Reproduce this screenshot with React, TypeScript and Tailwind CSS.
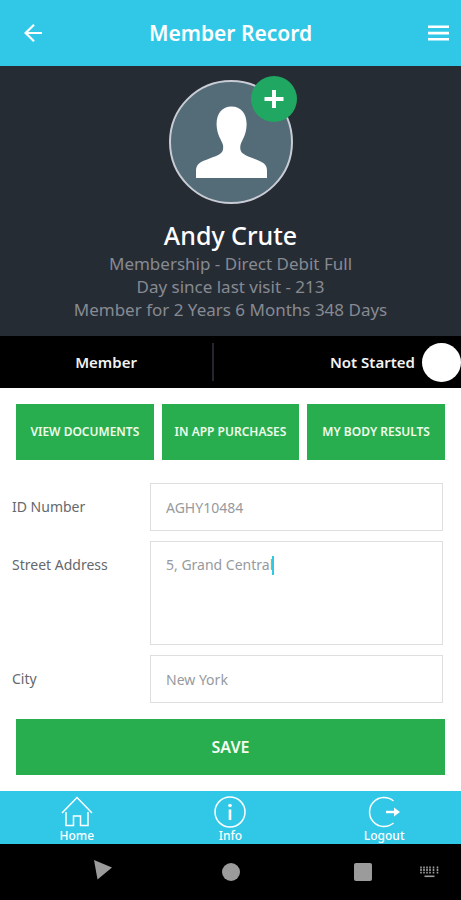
import type { ReactNode } from "react";

function Header() {
  return (
    <header className="grid h-[66px] grid-cols-[64px_1fr_64px] items-center bg-[#31c8e8] text-white">
      <button type="button" aria-label="Back" className="flex h-full items-center pl-6">
        <svg viewBox="0 0 18 18" className="h-[18px] w-[18px]" fill="none" stroke="currentColor" strokeWidth="2.2">
          <path d="M18 9H1.5M10 0.8 1.6 9 10 17.2" />
        </svg>
      </button>
      <h1 className="text-center text-[21px] leading-8 font-semibold">Member Record</h1>
      <button type="button" aria-label="Menu" className="flex h-full items-center justify-end pr-3">
        <svg viewBox="0 0 21 16" className="h-4 w-[21px]" fill="currentColor">
          <path d="M0 0.5h21v2.6H0zM0 6.8h21v2.6H0zM0 13h21v2.6H0z" />
        </svg>
      </button>
    </header>
  );
}

function Profile() {
  return (
    <section className="flex flex-col items-center bg-[#262c34] pt-[14px] pb-[15px] text-center">
      <div className="relative">
        <div className="h-[124px] w-[124px] overflow-hidden rounded-full border-2 border-[#c9ccd4] bg-[#546b78]">
          <svg viewBox="0 0 120 120" className="h-full w-full" fill="#fff">
            <path d="M60.500 24.500C70 24.500 76 32 75.600 43C75.300 53 71 58 69.500 63C68.800 67 69.500 69.500 72 71.500C77 75.500 88 77.500 93 81.500C95.500 84 96 86 96 89V96H25V89C25 86 25.500 84 28 81.500C33 77.500 44 75.500 49.500 71.500C52 69.500 52.500 67 52 63C50.500 58 46 53 45.600 43C45.200 32 51 24.500 60.500 24.500Z" />
          </svg>
        </div>
        <button
          type="button"
          aria-label="Add photo"
          className="absolute -top-1 -right-1 flex h-[46px] w-[46px] items-center justify-center rounded-full bg-[#20a761]"
        >
          <svg viewBox="0 0 20 20" className="h-5 w-5" stroke="#fff" strokeWidth="4">
            <path d="M10 1v18M0.500 10h19" />
          </svg>
        </button>
      </div>
      <h2 className="mt-[15px] text-[25px] leading-[33px] font-medium text-white">Andy Crute</h2>
      <div className="text-[17px] leading-[23px] text-[#868a92]">
        <p>Membership - Direct Debit Full</p>
        <p>Day since last visit - 213</p>
        <p>Member for 2 Years 6 Months 348 Days</p>
      </div>
    </section>
  );
}

function StatusBar() {
  return (
    <section className="flex h-[52px] items-center bg-black text-[15px] font-semibold text-[#f2f2f2]">
      <div className="w-[46%] text-center">Member</div>
      <div className="h-[38px] w-[2px] bg-[#24272e]" />
      <div className="flex flex-1 items-center justify-end gap-[7px]">
        <span>Not Started</span>
        <span className="h-[39px] w-[39px] rounded-full bg-white" />
      </div>
    </section>
  );
}

const actions = ["VIEW DOCUMENTS", "IN APP PURCHASES", "MY BODY RESULTS"];

const fieldClass =
  "block w-full resize-none border border-[#dedede] bg-white px-[15px] text-sm leading-5 text-[#979a9e] outline-none";

function Field({ id, label, children }: { id: string; label: string; children: ReactNode }) {
  return (
    <div className="grid grid-cols-[138px_1fr] items-start">
      <label htmlFor={id} className="pt-[14px] text-sm leading-5 text-[#65686c]">
        {label}
      </label>
      {children}
    </div>
  );
}

function MemberForm() {
  return (
    <main className="flex flex-1 flex-col bg-white py-4">
      <div className="grid grid-cols-3 gap-2 px-4">
        {actions.map((name) => (
          <button
            key={name}
            type="button"
            className="h-14 bg-[#29ae4f] text-xs font-semibold whitespace-nowrap text-[#eefbea]"
          >
            {name}
          </button>
        ))}
      </div>
      <form onSubmit={(e) => e.preventDefault()}>
        <div className="flex flex-col gap-[10px] pt-[23px] pr-[18px] pb-4 pl-3">
          <Field id="member-id" label="ID Number">
            <input id="member-id" type="text" defaultValue="AGHY10484" className={`${fieldClass} h-12`} />
          </Field>
          <Field id="street" label="Street Address">
            <div className="relative">
              <textarea id="street" defaultValue="5, Grand Central" className={`${fieldClass} h-[104px] py-[13px]`} />
              <span className="absolute top-[15px] left-[122px] h-[19px] w-[2px] bg-[#31c8e8]" />
            </div>
          </Field>
          <Field id="city" label="City">
            <input id="city" type="text" defaultValue="New York" className={`${fieldClass} h-12`} />
          </Field>
        </div>
        <div className="px-4">
          <button type="submit" className="h-14 w-full bg-[#29ae4f] text-base font-semibold text-[#f4fdf2]">
            SAVE
          </button>
        </div>
      </form>
    </main>
  );
}

function HomeIcon() {
  return (
    <svg viewBox="0 0 32 32" className="h-8 w-8" fill="none" stroke="currentColor" strokeWidth="1.5">
      <path d="M1 17 16 1.500 31 17M5 16v13.500h7.500V20h7v9.500H27V16" />
    </svg>
  );
}

function InfoIcon() {
  return (
    <svg viewBox="0 0 32 32" className="h-8 w-8" fill="none" stroke="currentColor" strokeWidth="1.500">
      <circle cx="16" cy="16" r="15" />
      <path d="M16 13.500v10.500" strokeWidth="2.600" />
      <circle cx="16" cy="9.500" r="1.800" fill="currentColor" stroke="none" />
    </svg>
  );
}

function LogoutIcon() {
  return (
    <svg viewBox="0 0 32 32" className="h-8 w-8" fill="none" stroke="currentColor" strokeWidth="1.500">
      <path d="M25.500 5A14.500 14.500 0 1 0 25.500 27" />
      <path d="M18 16h9" strokeWidth="2.400" />
      <path d="M26 11.500 32 16 26 20.500Z" fill="currentColor" stroke="none" />
    </svg>
  );
}

const tabs = [
  { name: "Home", icon: <HomeIcon /> },
  { name: "Info", icon: <InfoIcon /> },
  { name: "Logout", icon: <LogoutIcon /> },
];

function TabBar() {
  return (
    <nav className="grid h-[53px] grid-cols-3 bg-[#31c8e8] text-white">
      {tabs.map((tab) => (
        <a key={tab.name} href="#" className="flex flex-col items-center pt-[5px] text-xs leading-4 font-medium">
          {tab.icon}
          {tab.name}
        </a>
      ))}
    </nav>
  );
}

function SystemBar() {
  return (
    <div className="grid h-14 grid-cols-[1fr_auto_1fr] items-center bg-black text-[#9b9b9b]">
      <button type="button" aria-label="System back" className="flex justify-self-center pr-6 pb-1 pl-2">
        <svg viewBox="0 0 20 20" className="h-5 w-5" fill="currentColor">
          <path d="M1 0 19 7.500 4.500 19.500Z" />
        </svg>
      </button>
      <button type="button" aria-label="System home" className="h-[18px] w-[18px] rounded-full bg-[#9b9b9b]" />
      <div className="flex items-center justify-end gap-12 pr-[22px]">
        <button type="button" aria-label="Recent apps" className="h-[18px] w-[18px] rounded-xs bg-[#9b9b9b]" />
        <button type="button" aria-label="Keyboard">
          <svg viewBox="0 0 19 12" className="h-3 w-[19px]" stroke="currentColor" fill="none">
            <path d="M1 0.500v7M4 0.500v7M7 0.500v7M10 0.500v7M13.500 0.500v7M17.500 0.500v7" strokeWidth="1.600" strokeDasharray="2 0.600" />
            <path d="M4.500 10.300h10" strokeWidth="1.600" />
          </svg>
        </button>
      </div>
    </div>
  );
}

export default function App() {
  return (
    <div className="flex min-h-screen flex-col bg-white font-['Noto_Sans','Open_Sans',sans-serif]">
      <Header />
      <Profile />
      <StatusBar />
      <MemberForm />
      <TabBar />
      <SystemBar />
    </div>
  );
}
